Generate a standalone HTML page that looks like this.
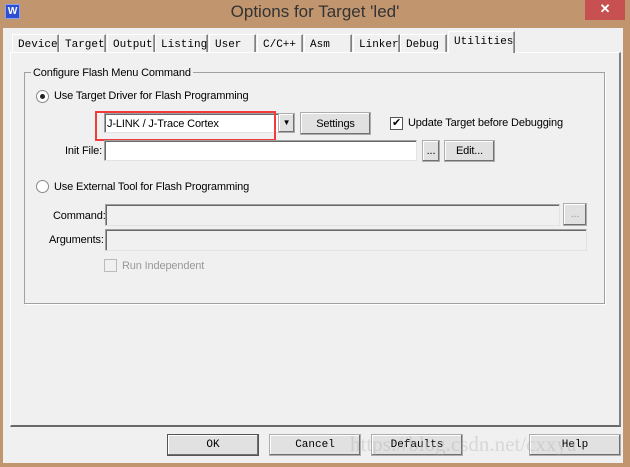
<!DOCTYPE html>
<html><head><meta charset="utf-8"><style>
*{box-sizing:border-box;margin:0;padding:0}
body{width:630px;height:467px;background:#c1966f;position:relative;overflow:hidden;font-family:"Liberation Sans",sans-serif;font-size:11px;letter-spacing:-0.15px;color:#000}
.a{position:absolute;white-space:nowrap}
.mono{font-family:"Liberation Mono",monospace;font-size:11px;letter-spacing:0}
.btn{position:absolute;background:#e1e1e1;border:1px solid #adadad;box-shadow:inset -1px -1px 0 #707070,inset 1px 1px 0 #fff;text-align:center}
.inp{position:absolute;background:#fff;border:1px solid;border-color:#a0a0a0 #e3e3e3 #e3e3e3 #a0a0a0;box-shadow:inset 1px 1px 0 #696969}
.dis{background:#f0f0f0}
.tab{position:absolute;top:34px;height:18px;border:1px solid #fff;border-right:1px solid #808080;border-bottom:none;padding:4px 0 0 5px;box-shadow:inset -1px 0 0 #a0a0a0}
</style></head><body>
<div class="a" style="left:5px;top:4px;width:15px;height:15px;background:#2f4fd0;border:1px solid #8aa0f0;color:#fff;font-size:10px;font-weight:bold;text-align:center;line-height:13px">W</div>
<div class="a" style="left:0;top:1px;width:630px;text-align:center;font-size:17px;letter-spacing:0;color:#333;line-height:22px">Options for Target 'led'</div>
<div class="a" style="left:585px;top:0;width:40px;height:20px;background:#c75050;color:#fff;text-align:center;font-size:13px;line-height:18px;font-weight:bold">✕</div>
<div class="a" style="left:3px;top:28px;width:620px;height:435px;background:#f0f0f0"></div>
<div class="a" style="left:10px;top:52px;width:611px;height:375px;border:1px solid #fff;border-right:2px solid #808080;border-bottom:2px solid #696969"></div>
<div class="tab mono" style="left:12px;width:47px">Device</div>
<div class="tab mono" style="left:59px;width:47px">Target</div>
<div class="tab mono" style="left:107px;width:48px">Output</div>
<div class="tab mono" style="left:155px;width:53px">Listing</div>
<div class="tab mono" style="left:209px;width:47px">User</div>
<div class="tab mono" style="left:257px;width:46px">C/C++</div>
<div class="tab mono" style="left:304px;width:48px">Asm</div>
<div class="tab mono" style="left:353px;width:47px">Linker</div>
<div class="tab mono" style="left:400px;width:47px">Debug</div>
<div class="tab mono" style="left:448px;top:31px;width:67px;height:22px;background:#f0f0f0;padding-top:4px">Utilities</div>
<div class="a" style="left:24px;top:72px;width:581px;height:232px;border:1px solid #a0a0a0;box-shadow:1px 1px 0 #fff"></div>
<div class="a" style="left:31px;top:67px;background:#f0f0f0;padding:0 2px">Configure Flash Menu Command</div>
<div class="a" style="left:36px;top:90px;width:13px;height:13px;border-radius:50%;border:1px solid #888;background:#fff"><div class="a" style="left:3px;top:3px;width:5px;height:5px;border-radius:50%;background:#222"></div></div>
<div class="a" style="left:54px;top:90px">Use Target Driver for Flash Programming</div>
<div class="inp" style="left:104px;top:113px;width:175px;height:20px;padding:4px 0 0 2px">J-LINK / J-Trace Cortex</div>
<div class="btn" style="left:278px;top:113px;width:17px;height:20px;font-size:8px;line-height:18px">▼</div>
<div class="a" style="left:95px;top:111px;width:181px;height:30px;border:2px solid #f03c3c"></div>
<div class="btn" style="left:300px;top:112px;width:71px;height:23px;line-height:22px">Settings</div>
<div class="a" style="left:390px;top:117px;width:13px;height:13px;border:1px solid #555;background:#fff;font-size:11px;line-height:11px;text-align:center">✔</div>
<div class="a" style="left:408px;top:117px">Update Target before Debugging</div>
<div class="a" style="left:65px;top:145px">Init File:</div>
<div class="inp" style="left:104px;top:140px;width:313px;height:21px"></div>
<div class="btn" style="left:422px;top:140px;width:18px;height:22px;line-height:21px">...</div>
<div class="btn" style="left:444px;top:140px;width:51px;height:22px;line-height:21px">Edit...</div>
<div class="a" style="left:36px;top:180px;width:13px;height:13px;border-radius:50%;border:1px solid #888;background:#fff"></div>
<div class="a" style="left:54px;top:181px">Use External Tool for Flash Programming</div>
<div class="a" style="left:53px;top:210px">Command:</div>
<div class="inp dis" style="left:105px;top:204px;width:455px;height:22px"></div>
<div class="btn" style="left:563px;top:203px;width:24px;height:23px;line-height:21px;color:#999">...</div>
<div class="a" style="left:49px;top:234px">Arguments:</div>
<div class="inp dis" style="left:105px;top:229px;width:482px;height:22px"></div>
<div class="a" style="left:104px;top:259px;width:13px;height:13px;border:1px solid #bbb"></div>
<div class="a" style="left:122px;top:260px;color:#999">Run Independent</div>
<div class="btn mono" style="left:167px;top:434px;width:92px;height:22px;line-height:21px;border:1px solid #555">OK</div>
<div class="btn mono" style="left:269px;top:434px;width:92px;height:22px;line-height:21px">Cancel</div>
<div class="btn mono" style="left:371px;top:434px;width:92px;height:22px;line-height:21px">Defaults</div>
<div class="btn mono" style="left:529px;top:434px;width:92px;height:22px;line-height:21px">Help</div>
<div class="a" style="left:350px;top:432px;font-family:'Liberation Serif',serif;font-size:21px;letter-spacing:0;color:rgba(170,170,170,0.35)">https://blog.csdn.net/cxxya</div>
</body></html>
